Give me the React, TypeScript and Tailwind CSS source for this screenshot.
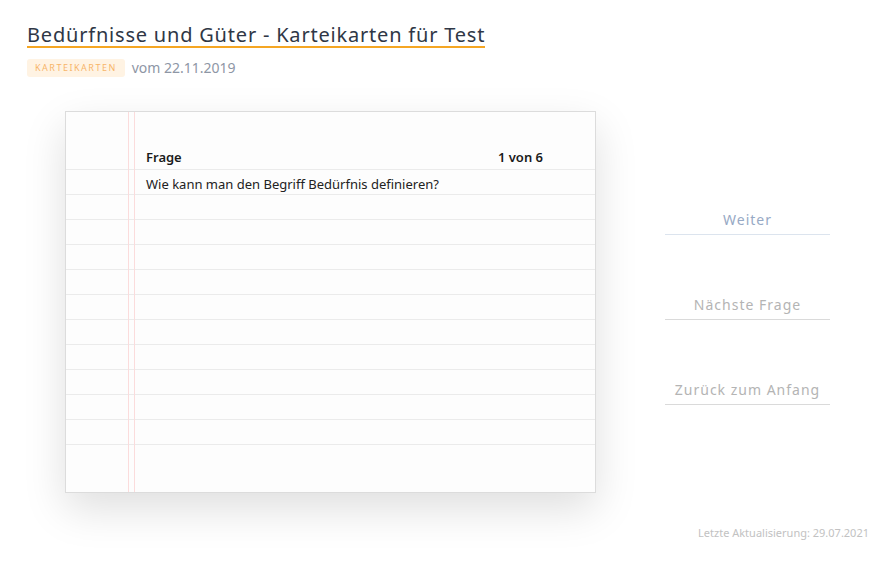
const rows = Array.from({ length: 11 }, (_, i) => i);

const actions = [
  { label: 'Weiter', text: 'text-[#97a9c5]', line: 'border-[#dce4ee]' },
  { label: 'Nächste Frage', text: 'text-[#b4b4b4]', line: 'border-[#dadada]' },
  { label: 'Zurück zum Anfang', text: 'text-[#b4b4b4]', line: 'border-[#dadada]' },
];

export default function App() {
  return (
    <div className="min-h-screen bg-white font-['Noto_Sans',sans-serif] text-[#222]">
      <div className="px-[27px] pt-[24px]">
        {/* Header */}
        <h1 className="inline-block border-b-2 border-[#f5a623] text-[20px] leading-[22px] tracking-[0.8px] text-[#2f3746]">
          Bedürfnisse und Güter - Karteikarten für Test
        </h1>
        <div className="mt-[9px] flex items-center gap-[7px]">
          <span className="rounded-[3px] bg-[#fff3e3] px-[8px] py-[3px] text-[9px] leading-[12px] tracking-[1.5px] text-[#f7b569]">
            KARTEIKARTEN
          </span>
          <span className="text-[14px] text-[#8e96a5]">vom 22.11.2019</span>
        </div>

        {/* Content */}
        <div className="mt-[33px] flex items-start">
          <div className="relative ml-[38px] flex h-[382px] w-[531px] flex-col border border-[#dcdcdc] bg-[#fdfdfd] shadow-[0_16px_40px_rgba(0,0,0,0.13)]">
            <div className="absolute top-0 bottom-0 left-[62px] w-px bg-[#fbdcdc]" />
            <div className="absolute top-0 bottom-0 left-[68px] w-px bg-[#fbdcdc]" />
            <div className="flex h-[58px] items-end justify-between border-b border-[#ebebeb] pb-[2px] pl-[80px] pr-[52px] text-[13px] font-semibold text-[#1a1a1a]">
              <span>Frage</span>
              <span>1 von 6</span>
            </div>
            {rows.map((i) => (
              <div
                key={i}
                className="flex h-[25px] items-end border-b border-[#ebebeb] pb-0 pl-[80px] text-[13px] text-[#222]"
              >
                {i === 0 ? 'Wie kann man den Begriff Bedürfnis definieren?' : ''}
              </div>
            ))}
          </div>

          <div className="ml-[69px] mt-[98px] flex w-[165px] flex-col gap-[59px]">
            {actions.map((a) => (
              <button
                key={a.label}
                className={`border-b ${a.line} pb-[4px] text-center text-[14px] tracking-[1px] ${a.text}`}
              >
                {a.label}
              </button>
            ))}
          </div>
        </div>

        <div className="mt-[32px] flex justify-end text-[11px] text-[#c2c2c2]">
          Letzte Aktualisierung: 29.07.2021
        </div>
      </div>
    </div>
  );
}
